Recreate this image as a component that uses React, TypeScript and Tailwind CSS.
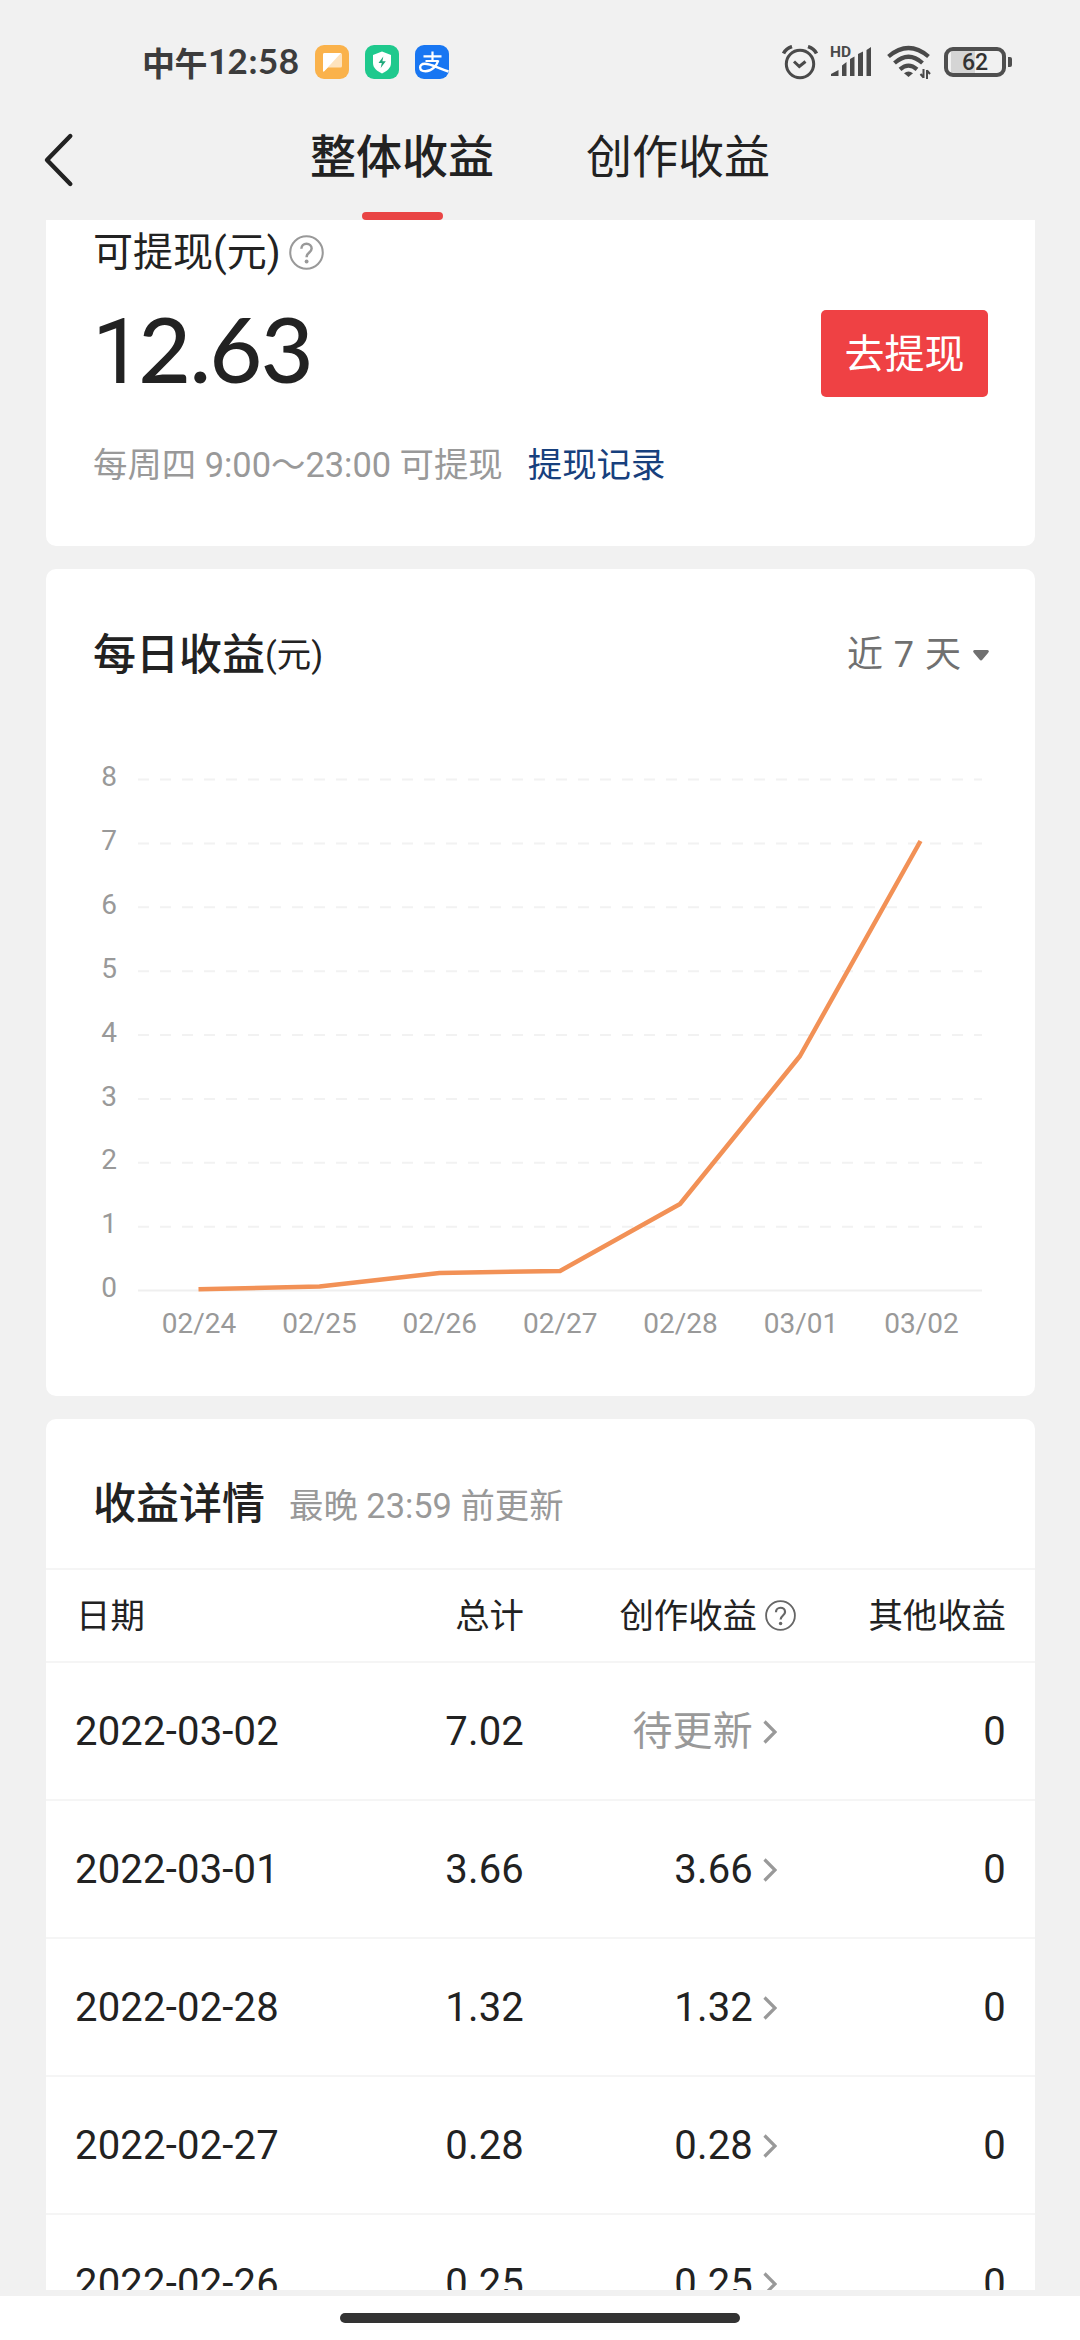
import React from "react";

const yTicks = [8, 7, 6, 5, 4, 3, 2, 1, 0];
const days = ["02/24", "02/25", "02/26", "02/27", "02/28", "03/01", "03/02"];
const linePoints = "152.5,720.3 273.5,717.6 393.5,704 514,702 634,635 754,487 874.5,272";

const rows = [
  { date: "2022-03-02", total: "7.02", creation: "待更新", other: "0", pending: true },
  { date: "2022-03-01", total: "3.66", creation: "3.66", other: "0", pending: false },
  { date: "2022-02-28", total: "1.32", creation: "1.32", other: "0", pending: false },
  { date: "2022-02-27", total: "0.28", creation: "0.28", other: "0", pending: false },
  { date: "2022-02-26", total: "0.25", creation: "0.25", other: "0", pending: false },
];

function HelpIcon({ className }: { className: string }) {
  return (
    <svg className={className} viewBox="0 0 34 34" fill="none" stroke="currentColor" strokeWidth="2">
      <circle cx="17" cy="17" r="15.8" />
      <path d="M12 13.4c0-3 2.200-4.900 5-4.900s5 1.900 5 4.600c0 3.900-4.900 3.900-4.900 8.400" strokeWidth="2.400" />
      <circle cx="17.100" cy="25.700" r="1.900" fill="currentColor" stroke="none" />
    </svg>
  );
}

function StatusBar() {
  return (
    <div className="flex h-[84px] shrink-0 items-start justify-between pl-[142px] pr-[68px] pt-[45px] text-[#3c3c3c]">
      <div className="flex items-center">
        <div className="flex h-[34px] w-[157px] items-center whitespace-nowrap pb-[1px] font-bold leading-[34px]">
          <span className="font-['Noto_Sans_CJK_SC',sans-serif] text-[33px] tracking-[-0.5px]">中午</span>
          <span className="ml-[1px] font-['Lato',sans-serif] text-[35px] tracking-[0.5px]">
            <span className="font-['Roboto',sans-serif] text-[35px] tracking-[-0.5px]">1</span>2:58
          </span>
        </div>
        <svg className="ml-[16px] size-[34px]" viewBox="0 0 34 34">
          <rect width="34" height="34" rx="9" fill="#fab24b" />
          <path d="M8 9.500Q8 8 9.500 8H25.500Q27 8 27 9.500V21Q27 22.500 25.500 22.500H13L9.200 26.200Q8 27 8 25.500Z" fill="#fee3bd" />
          <path d="M8 9.500Q8 8 9.500 8H26L9.200 26.200Q8 27 8 25.500Z" fill="#fff" />
        </svg>
        <svg className="ml-[16px] size-[34px]" viewBox="0 0 34 34">
          <rect width="34" height="34" rx="9" fill="#1fc98d" />
          <path d="M17 6.500L26 10V18C26 23 22 26 17 28.500C12 26 8 23 8 18V10Z" fill="#fff" />
          <path d="M18.300 11.500L13.500 18H16.800L15.700 23L20.800 16.200H17.400Z" fill="#1fa87a" />
        </svg>
        <svg className="ml-[16px] size-[34px]" viewBox="0 0 34 34" fill="none" stroke="#fff">
          <rect width="34" height="34" rx="9" fill="#1876f2" stroke="none" />
          <path d="M8.500 11.300H26.500M17.500 6.500V16M10.500 16H23.500" strokeWidth="2.200" />
          <path d="M23.300 15.500C21.500 21 17 26.300 10.500 26.300C3.500 26.300 3.500 18.800 9.800 18.800C16 18.800 22 22.800 33.500 26.500" strokeWidth="2.400" />
        </svg>
      </div>
      <div className="flex items-start">
        <svg className="h-[35px] w-[36px]" viewBox="0 0 36 35" fill="none" stroke="#4a4a4a">
          <circle cx="18" cy="19" r="13.700" strokeWidth="3" />
          <path d="M12 16.500L17.300 21.500L23.500 16.500" strokeWidth="3" />
          <path d="M1.500 8.500Q4 3.500 10 1.600M34.500 8.500Q32 3.500 26 1.600" strokeWidth="3.600" />
        </svg>
        <svg className="ml-[12px] h-[34px] w-[42px] overflow-visible" viewBox="0 0 42 34" fill="#4a4a4a">
          <text x="0" y="12" className="font-['Roboto',sans-serif] text-[15.500px] font-bold">HD</text>
          <path d="M1 31V29L8.500 25V31ZM12 31V20.500L16.500 17V31ZM20 31V14L24.500 11.500V31ZM28 31V9L33 6.500V31ZM36.500 31V5L41 2V31Z" />
        </svg>
        <svg className="ml-[15px] h-[34px] w-[44px]" viewBox="0 0 44 34" fill="none" stroke="#4a4a4a">
          <path d="M1.500 11.500Q21.500-5.500 41.500 11.500" strokeWidth="4.200" />
          <path d="M7.500 18Q21.500 5.500 35.500 18" strokeWidth="4.200" />
          <path d="M13 24.300Q21.500 17 30 24.300" strokeWidth="4.200" />
          <path d="M17 28.300Q21.500 24.800 26 28.300L21.500 32Z" fill="#4a4a4a" stroke="none" />
          <path d="M36.500 24V33M40 34V25M33.500 29L36.500 32.500M40 25.500L43 29" strokeWidth="2" />
        </svg>
        <div className="ml-[13px] mt-[2px] flex items-center">
          <div className="flex h-[30px] w-[62px] items-center justify-center rounded-[9px] border-4 border-[#4f4f4f] bg-[linear-gradient(90deg,transparent_6%,#d5d5d5_6%,#d5d5d5_50%,transparent_50%)] pt-[2px] font-['Roboto',sans-serif] text-[23px] font-medium leading-[22px] text-[#333]">
            62
          </div>
          <div className="ml-[2px] h-[10px] w-[4px] rounded-r-[2px] bg-[#4f4f4f]" />
        </div>
      </div>
    </div>
  );
}

function TopTabs() {
  return (
    <div className="flex h-[136px] shrink-0 pl-[42px] text-[46px] leading-[46px] text-[#222]">
      <svg className="mt-[48px] h-[56px] w-[32px]" viewBox="0 0 32 56" fill="none" stroke="#222" strokeWidth="4.400" strokeLinecap="round" strokeLinejoin="round">
        <path d="M28.300 4L5 28L28.300 52" />
      </svg>
      <div className="ml-[236px] flex w-[184px] flex-col items-center pt-[50px] font-medium">
        <span className="whitespace-nowrap">整体收益</span>
        <span className="mt-auto h-[8px] w-[81px] rounded-[4px] bg-[#e94444]" />
      </div>
      <div className="ml-[92px] pt-[50px]">创作收益</div>
    </div>
  );
}

function Balance() {
  return (
    <section className="flex h-[326px] flex-col rounded-b-[10px] bg-white px-[47px] pt-[13px]">
      <div className="flex h-[40px] items-center text-[40px] leading-[40px]">
        可提现(元)
        <HelpIcon className="-mt-[1px] ml-[8px] size-[35px] text-[#999]" />
      </div>
      <div className="mt-[37px] flex h-[87px] items-center justify-between">
        <span className="-ml-[1px] -mt-[7px] font-['Lato',sans-serif] text-[91px] font-medium leading-[87px] tracking-[-1.5px]">
          <span className="font-['Roboto',sans-serif] font-normal tracking-[-5px]">1</span>2.63
        </span>
        <button className="h-[87px] w-[167px] rounded-[5px] bg-[#ef4144] pt-[2px] text-[40px] leading-[85px] text-white">去提现</button>
      </div>
      <div className="mt-[50px] flex whitespace-nowrap text-[34.400px] leading-[36px] text-[#999]">
        每周四 9:00～23:00 可提现
        <a className="ml-[25px] text-[#17407d]">提现记录</a>
      </div>
    </section>
  );
}

function DailyChart() {
  return (
    <section className="mt-[23px] h-[827px] rounded-[10px] bg-white">
      <div className="flex h-[172px] items-center justify-between pl-[47px] pr-[46px]">
        <h2 className="flex items-center text-[43px] font-medium leading-[44px]">
          每日收益<span className="text-[34.400px] font-normal">(元)</span>
        </h2>
        <div className="flex items-center text-[36px] leading-[44px] text-[#707070] [word-spacing:2px]">
          近 7 天
          <svg className="ml-[12px] h-[11px] w-[16px]" viewBox="0 0 16 11" fill="#707070">
            <path d="M1.500 0H14.500Q17 0.500 15 3L9.500 9.500Q8 11.500 6.500 9.500L1 3Q-1 0.500 1.500 0Z" />
          </svg>
        </div>
      </div>
      <svg className="-mt-[172px] h-[827px] w-[989px]" viewBox="0 0 989 827" fill="none">
        {yTicks.map((tick, i) => (
          <g key={tick}>
            <text x="63" y={217 + i * 63.9} textAnchor="middle" fill="#999" className="font-['Roboto',sans-serif] text-[28px]">
              {tick}
            </text>
            <line
              x1="92"
              x2="936"
              y1={210.500 + i * 63.88}
              y2={210.500 + i * 63.88}
              stroke={tick === 0 ? "#efefef" : "#f2f2f2"}
              strokeWidth="2"
              strokeDasharray={tick === 0 ? undefined : "11 11"}
            />
          </g>
        ))}
        {days.map((day, i) => (
          <text key={day} x={153 + i * 120.4} y="764" textAnchor="middle" fill="#999" className="font-['Roboto',sans-serif] text-[28px]">
            {day}
          </text>
        ))}
        <polyline points={linePoints} stroke="#f29156" strokeWidth="4.500" strokeLinejoin="round" />
      </svg>
    </section>
  );
}

function Details() {
  return (
    <section className="mt-[23px] rounded-t-[10px] bg-white">
      <div className="flex h-[151px] items-center border-b-2 border-[#f5f5f5] pl-[47px] pt-[20px]">
        <h2 className="text-[43px] font-medium leading-[44px]">收益详情</h2>
        <span className="ml-[24px] mt-[4px] text-[34.400px] leading-[44px] text-[#999]">最晚 23:59 前更新</span>
      </div>
      <div className="grid h-[93px] grid-cols-[252px_196px_272px_210px] items-center border-b-2 border-[#f5f5f5] pl-[30px] text-[34.400px] leading-[44px]">
        <span>日期</span>
        <span className="text-right">总计</span>
        <span className="flex items-center justify-end">
          创作收益
          <HelpIcon className="ml-[8px] size-[31px] text-[#666]" />
        </span>
        <span className="text-right">其他收益</span>
      </div>
      {rows.map((row) => (
        <div key={row.date} className="grid h-[138px] grid-cols-[253px_196px_253px_229px] items-center border-b-2 border-[#f5f5f5] pl-[29px] pt-[2px] text-[40px] leading-[44px] tracking-[0.2px]">
          <span className="whitespace-nowrap">{row.date}</span>
          <span className="text-right">{row.total}</span>
          <span className="flex items-center justify-end">
            <span className={row.pending ? "text-[#999]" : ""}>{row.creation}</span>
            <svg className="ml-[10px] h-[24px] w-[14px]" viewBox="0 0 14 24" fill="none" stroke="#999" strokeWidth="3.200">
              <path d="M1.500 1.500L12 12L1.500 22.500" />
            </svg>
          </span>
          <span className="text-right">{row.other}</span>
        </div>
      ))}
    </section>
  );
}

export default function App() {
  return (
    <div className="flex h-[2340px] w-[1080px] flex-col overflow-hidden bg-[#f1f1f1] font-['Roboto','Noto_Sans_CJK_SC',sans-serif] text-[#222]">
      <StatusBar />
      <TopTabs />
      <main className="h-[2070px] shrink-0 overflow-hidden pl-[46px] pr-[45px]">
        <Balance />
        <DailyChart />
        <Details />
      </main>
      <div className="mt-[6px] flex h-[44px] shrink-0 justify-center bg-white pt-[17px]">
        <div className="h-[10px] w-[400px] rounded-full bg-[#333]" />
      </div>
    </div>
  );
}
